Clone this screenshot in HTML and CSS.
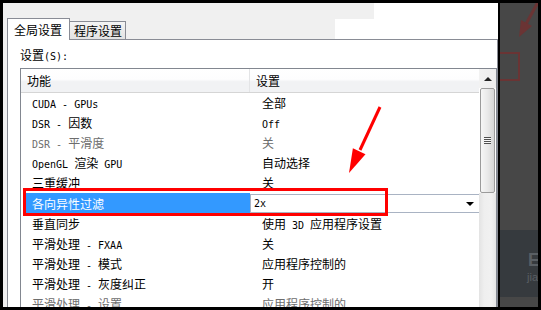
FILE: index.html
```html
<!DOCTYPE html>
<html>
<head>
<meta charset="utf-8">
<link rel="stylesheet" href="styles.css">
</head>
<body>
<div class="screen">
  <div class="window">
    <div class="tabs">
      <div class="tab active">全局设置</div>
      <div class="tab inactive">程序设置</div>
    </div>
    <div class="panel">
      <div class="label">设置<span class="m">(S):</span></div>
      <div class="listbox">
        <div class="list">
          <div class="row head"><div class="c1">功能</div><div class="c2">设置</div></div>
          <div class="row"><div class="c1"><span class="m">CUDA - GPUs</span></div><div class="c2">全部</div></div>
          <div class="row"><div class="c1"><span class="m">DSR - </span>因数</div><div class="c2"><span class="m">Off</span></div></div>
          <div class="row dis"><div class="c1"><span class="m">DSR - </span>平滑度</div><div class="c2">关</div></div>
          <div class="row"><div class="c1"><span class="m">OpenGL </span>渲染<span class="m"> GPU</span></div><div class="c2">自动选择</div></div>
          <div class="row"><div class="c1">三重缓冲</div><div class="c2">关</div></div>
          <div class="row sel"><div class="c1">各向异性过滤</div><div class="c2"><div class="combo"><span class="m">2x</span><span class="drop"></span></div></div></div>
          <div class="row"><div class="c1">垂直同步</div><div class="c2">使用<span class="m"> 3D </span>应用程序设置</div></div>
          <div class="row"><div class="c1">平滑处理<span class="m"> - FXAA</span></div><div class="c2">关</div></div>
          <div class="row"><div class="c1">平滑处理<span class="m"> - </span>模式</div><div class="c2">应用程序控制的</div></div>
          <div class="row"><div class="c1">平滑处理<span class="m"> - </span>灰度纠正</div><div class="c2">开</div></div>
          <div class="row dis"><div class="c1">平滑处理<span class="m"> - </span>设置</div><div class="c2">应用程序控制的</div></div>
        </div>
        <div class="scrollbar">
          <div class="sb-up"><span class="up-tri"></span></div>
          <div class="sb-thumb"><span class="grip"></span></div>
          <div class="sb-track"></div>
        </div>
      </div>
    </div>
  </div>
  <div class="dark">
    <div class="dk-top">
      <svg width="38" height="227" viewBox="0 0 38 227">
        <rect x="-5" y="50" width="24" height="27" fill="none" stroke="#6a3434" stroke-width="2"/>
        <line x1="38" y1="-1" x2="26" y2="21" stroke="#6a3434" stroke-width="3"/>
        <polygon points="19,34 32,23 21,17" fill="#6a3434"/>
      </svg>
    </div>
    <div class="dk-mid"><div class="ghost-big">E</div><div class="ghost-small">jia</div></div>
    <div class="dk-bot"></div>
  </div>
</div>
<div class="white-a"></div>
<div class="white-b"></div>
<div class="redbox"></div>
<svg class="arrow" width="541" height="310" viewBox="0 0 541 310">
  <line x1="380" y1="107" x2="360" y2="150" stroke="#ff0000" stroke-width="3"/>
  <polygon points="349,173 365.5,154.3 352.9,148.3" fill="#ff0000"/>
</svg>
</body>
</html>
```
FILE: styles.css
```css
html, body {
  margin: 0;
  padding: 0;
}
body {
  width: 541px;
  height: 310px;
  background: #000;
  overflow: hidden;
  position: relative;
  font-family: "Noto Sans CJK SC", sans-serif;
  font-size: 12px;
  color: #000;
}
.m {
  font-family: "DejaVu Sans Mono", "Liberation Mono", monospace;
  font-size: 10px;
  white-space: pre;
}
.screen {
  display: flex;
  gap: 2px;
  padding: 3px;
  height: 310px;
  box-sizing: border-box;
}
.window {
  width: 495px;
  height: 304px;
  flex: none;
  background: #f0f0f0;
  padding: 15px 0 0 4px;
  box-sizing: border-box;
  overflow: hidden;
  display: flex;
  flex-direction: column;
}
.tabs {
  display: flex;
  align-items: flex-end;
  height: 22px;
  margin-bottom: -1px;
  position: relative;
  z-index: 1;
  flex: none;
}
.tab {
  box-sizing: border-box;
  border: 1px solid #898c95;
  border-bottom: none;
  white-space: nowrap;
}
.tab.active {
  width: 63px;
  height: 22px;
  background: #fff;
  padding-left: 6px;
  line-height: 21px;
}
.tab.inactive {
  width: 56px;
  height: 18px;
  border-left: none;
  margin-bottom: 1px;
  padding-left: 4px;
  line-height: 17px;
  background: linear-gradient(#f4f4f4, #e3e3e3);
}
.panel {
  flex: 1;
  background: #fff;
  border: 1px solid #898c95;
  border-bottom: none;
  padding-left: 12px;
}
.label {
  margin-top: 8px;
  height: 14px;
  line-height: 14px;
}
.listbox {
  margin-top: 6px;
  border: 1px solid #828790;
  display: flex;
  height: 260px;
}
.list {
  flex: 1;
  overflow: hidden;
}
.row {
  display: flex;
  height: 20px;
  line-height: 20px;
  white-space: nowrap;
}
.c1 {
  width: 229px;
  padding-left: 11px;
  box-sizing: border-box;
  flex: none;
}
.c2 {
  flex: 1;
  padding-left: 12px;
}
.head {
  height: 24px;
  line-height: 23px;
  border-bottom: 1px solid #d5d5d5;
  box-sizing: border-box;
  background: linear-gradient(#ffffff 0%, #fdfdfe 45%, #f1f2f4 55%, #f1f2f4 100%);
}
.head .c1 {
  padding-left: 6px;
  border-right: 1px solid #e3e4e6;
}
.head .c2 {
  padding-left: 6px;
}
.dis {
  color: #6d6d6d;
}
.sel {
  height: 21px;
}
.sel .c1 {
  margin-left: 3px;
  width: 226px;
  padding-left: 8px;
  background: #3399ff;
  color: #fff;
  line-height: 21px;
}
.sel .c2 {
  padding: 1px 0 1px 0;
}
.combo {
  height: 19px;
  box-sizing: border-box;
  border: 1px solid #a9b3c3;
  border-right: none;
  background: #fff;
  display: flex;
  align-items: center;
  justify-content: space-between;
  padding: 0 5px 0 3px;
  line-height: 17px;
}
.drop {
  width: 0;
  height: 0;
  border-left: 4px solid transparent;
  border-right: 4px solid transparent;
  border-top: 4px solid #000;
}
.scrollbar {
  width: 17px;
  flex: none;
  display: flex;
  flex-direction: column;
}
.sb-up {
  height: 19px;
  display: flex;
  align-items: center;
  justify-content: center;
  background: linear-gradient(to right, #f2f2f2, #ededed);
}
.up-tri {
  width: 0;
  height: 0;
  border-left: 4px solid transparent;
  border-right: 4px solid transparent;
  border-bottom: 4px solid #222;
}
.sb-thumb {
  height: 105px;
  margin: 0 1px;
  box-sizing: border-box;
  border: 1px solid #9b9b9b;
  border-radius: 2px;
  background: linear-gradient(to right, #f6f6f6, #e9e9e9 50%, #d6d6d6);
  display: flex;
  align-items: center;
  justify-content: center;
}
.grip {
  width: 7px;
  height: 7px;
  background: repeating-linear-gradient(#4f4f4f 0, #4f4f4f 1px, #f8f8f8 1px, #f8f8f8 2px);
}
.sb-track {
  flex: 1;
  background: linear-gradient(to right, #e3e3e3, #efefef 30%, #f1f1f1 70%, #e6e6e6);
}
.dark {
  flex: 1;
  display: flex;
  flex-direction: column;
  overflow: hidden;
}
.dk-top {
  height: 227px;
  background: #474747;
  flex: none;
}
.dk-top svg {
  display: block;
}
.dk-mid {
  height: 67px;
  background: #363a3e;
  flex: none;
  padding-left: 28px;
  box-sizing: border-box;
  padding-top: 22px;
  color: #5a5f64;
}
.ghost-big {
  font-family: "Liberation Sans", sans-serif;
  font-size: 18px;
  line-height: 16px;
  font-weight: bold;
}
.ghost-small {
  font-family: "Liberation Sans", sans-serif;
  font-size: 11px;
  line-height: 12px;
  margin-top: 3px;
  margin-left: -1px;
}
.dk-bot {
  flex: 1;
  background: #474747;
}
.white-a {
  position: absolute;
  left: 335px;
  top: 19px;
  width: 163px;
  height: 20px;
  background: #fff;
}
.white-b {
  position: absolute;
  left: 374px;
  top: 3px;
  width: 124px;
  height: 16px;
  background: #fff;
}
.redbox {
  position: absolute;
  left: 23px;
  top: 188px;
  width: 365px;
  height: 28px;
  box-sizing: border-box;
  border: 3px solid #ff0000;
}
.arrow {
  position: absolute;
  left: 0;
  top: 0;
  pointer-events: none;
}
```
